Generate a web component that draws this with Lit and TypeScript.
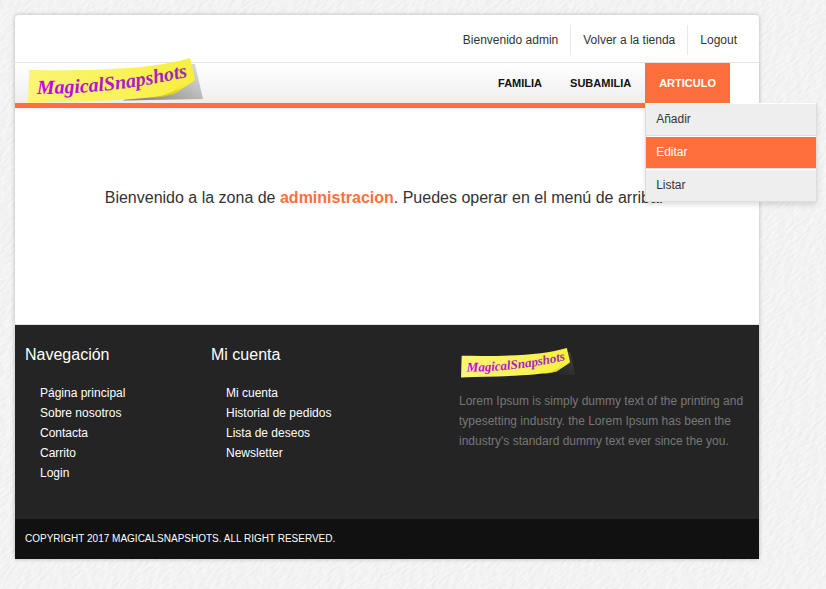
import { LitElement, html, css, svg } from "lit";
import { customElement, property } from "lit/decorators.js";

interface Column {
  title: string;
  links: string[];
}

const COLUMNS: Column[] = [
  { title: "Navegación", links: ["Página principal", "Sobre nosotros", "Contacta", "Carrito", "Login"] },
  { title: "Mi cuenta", links: ["Mi cuenta", "Historial de pedidos", "Lista de deseos", "Newsletter"] },
];

/** Sticky-note logo with the brand name running along its curve. */
@customElement("brand-logo")
export class BrandLogo extends LitElement {
  @property({ type: Boolean }) dark = false;

  static styles = css`
    :host { display: block; }
    svg { display: block; width: 100%; height: auto; overflow: visible; }
    text {
      font: italic bold 20px "Liberation Serif", serif;
      fill: url(#ink);
    }
  `;

  render() {
    const shade = this.dark
      ? svg`<stop offset="0" stop-color="#141414"/><stop offset="1" stop-color="#3c3c3c"/>`
      : svg`<stop offset="0" stop-color="#777"/><stop offset="1" stop-color="#d6d6d6"/>`;
    return html`
      <svg viewBox="0 0 176 46" role="img" aria-label="MagicalSnapshots">
        <defs>
          <linearGradient id="paper" x1="0" y1="0" x2="1" y2="0">
            <stop offset="0" stop-color="#fbf573"/>
            <stop offset="0.5" stop-color="#f9f35c"/>
            <stop offset="1" stop-color="#f8ef3c"/>
          </linearGradient>
          <linearGradient id="curl" x1="0.3" y1="0" x2="0.7" y2="1">
            <stop offset="0" stop-color="#fdf84e"/>
            <stop offset="0.5" stop-color="#f3ea35"/>
            <stop offset="1" stop-color="#b3a71c"/>
          </linearGradient>
          <linearGradient id="shade" x1="0" y1="1" x2="1" y2="0.3">${shade}</linearGradient>
          <linearGradient id="ink" gradientUnits="userSpaceOnUse" x1="8" y1="0" x2="160" y2="0">
            <stop offset="0" stop-color="#c800f0"/>
            <stop offset="1" stop-color="#9a2cb4"/>
          </linearGradient>
          <path id="line" d="M9 36 C60 36 110 31 176 15"/>
        </defs>
        <path d="M163 6 L167 6 L175 41 L95 42.500 Z" fill="url(#shade)"/>
        <path d="M1 12 C70 13 125 11 162 0 L167 22 L146 36 C110 43 60 43 0 45 Z" fill="url(#paper)"/>
        <path d="M167 22 L146 36 C140 38 132 39 124 40 C141 36 148 33 151 27 C157 26 162 24 167 22 Z" fill="url(#curl)"/>
        <text><textPath href="#line">MagicalSnapshots</textPath></text>
      </svg>
    `;
  }
}

@customElement("app-root")
export class AppRoot extends LitElement {
  static styles = css`
    :host {
      display: block;
      position: relative;
      min-height: 100vh;
      box-sizing: border-box;
      padding: 15px 67px 30px 15px;
      background: #f3f3f3;
      color: #333;
      font: 12px/20px "Liberation Sans", Arial, sans-serif;
    }
    a { color: inherit; text-decoration: none; }
    ul { list-style: none; margin: 0; padding: 0; }
    .texture { position: absolute; inset: 0; width: 100%; height: 100%; opacity: 0.4; }
    .sheet {
      position: relative;
      background: #fff;
      border-radius: 4px 4px 0 0;
      box-shadow: 0 0 4px rgba(0, 0, 0, 0.25);
    }
    .top {
      display: flex;
      justify-content: flex-end;
      padding: 10px 10px 7px;
      border-bottom: 1px solid #e5e5e5;
    }
    .top li { padding: 5px 12px; }
    .top li + li { border-left: 1px solid #e9e9e9; }
    .bar {
      display: flex;
      justify-content: space-between;
      height: 40px;
      padding-right: 29px;
      border-bottom: 5px solid #ff6f3b;
      background: linear-gradient(#fff, #eee) 0 0 / 100% 100% no-repeat content-box;
      box-shadow: 0 2px 4px rgba(0, 0, 0, 0.06);
    }
    .logo { width: 176px; margin: -5px 0 0 13px; }
    .menu { display: flex; }
    .menu > li { position: relative; }
    .tab {
      display: block;
      padding: 0 14px;
      font-size: 11px;
      line-height: 40px;
      font-weight: bold;
      color: #111;
    }
    .tab.open { background: #ff6f3b; color: #fff; }
    .drop {
      position: absolute;
      top: 100%;
      left: 0;
      z-index: 1;
      width: 170px;
      border: solid #ddd;
      border-width: 0 1px;
      box-shadow: 0 3px 5px rgba(0, 0, 0, 0.12);
    }
    .drop a {
      display: block;
      padding: 0 10px;
      line-height: 31px;
      background: #eee;
      border-top: 1px solid #fff;
      border-bottom: 1px solid #ddd;
    }
    .drop .current { background: #ff6f3b; color: #fff; }
    .welcome {
      margin: 0;
      padding: 80px 26px 116px 20px;
      font-size: 16px;
      text-align: center;
    }
    .welcome strong { color: #ff6f3b; }
    .foot {
      display: grid;
      grid-template-columns: 3fr 4fr 5fr;
      padding: 20px 0 36px;
      border-top: 1px solid #dde5dd;
      background: #242424;
      color: #fff;
    }
    .col { padding: 0 10px; }
    .col h2 { margin: 0 0 18px; font-size: 16px; font-weight: normal; }
    .col ul { padding-left: 15px; }
    .foot-logo { width: 115px; margin: 3px 0 13px 2px; }
    .about { margin: 0; color: #777; }
    .legal {
      margin: 0;
      padding: 10px;
      background: #111;
      color: #fff;
      font-size: 10px;
      text-transform: uppercase;
    }
  `;

  render() {
    return html`
      <svg class="texture" aria-hidden="true">
        <filter id="grain" x="0" y="0" width="100%" height="100%" color-interpolation-filters="sRGB">
          <feTurbulence type="fractalNoise" baseFrequency="0.12 0.4" numOctaves="3" seed="4" result="n"/>
          <feDiffuseLighting in="n" surfaceScale="0.3" lighting-color="#fff" diffuseConstant="1.15">
            <feDistantLight azimuth="225" elevation="56"/>
          </feDiffuseLighting>
        </filter>
        <g transform="rotate(-38)">
          <rect x="-100%" y="-100%" width="300%" height="400%" filter="url(#grain)"/>
        </g>
      </svg>
      <div class="sheet">
        <header>
          <ul class="top">
            <li><a href="#">Bienvenido admin</a></li>
            <li><a href="#">Volver a la tienda</a></li>
            <li><a href="#">Logout</a></li>
          </ul>
          <nav class="bar">
            <a class="logo" href="#"><brand-logo></brand-logo></a>
            <ul class="menu">
              <li><a class="tab" href="#">FAMILIA</a></li>
              <li><a class="tab" href="#">SUBAMILIA</a></li>
              <li>
                <a class="tab open" href="#">ARTICULO</a>
                <ul class="drop">
                  <li><a href="#">Añadir</a></li>
                  <li><a class="current" href="#">Editar</a></li>
                  <li><a href="#">Listar</a></li>
                </ul>
              </li>
            </ul>
          </nav>
        </header>
        <main>
          <p class="welcome">
            Bienvenido a la zona de <strong>administracion</strong>. Puedes operar en el menú de arriba.
          </p>
        </main>
        <footer>
          <div class="foot">
            ${COLUMNS.map(
              (c) => html`
                <section class="col">
                  <h2>${c.title}</h2>
                  <ul>${c.links.map((l) => html`<li><a href="#">${l}</a></li>`)}</ul>
                </section>
              `,
            )}
            <section class="col">
              <brand-logo class="foot-logo" dark></brand-logo>
              <p class="about">
                Lorem Ipsum is simply dummy text of the printing and typesetting industry. the Lorem
                Ipsum has been the industry's standard dummy text ever since the you.
              </p>
            </section>
          </div>
          <p class="legal">Copyright 2017 MagicalSnapshots. All right reserved.</p>
        </footer>
      </div>
    `;
  }
}
